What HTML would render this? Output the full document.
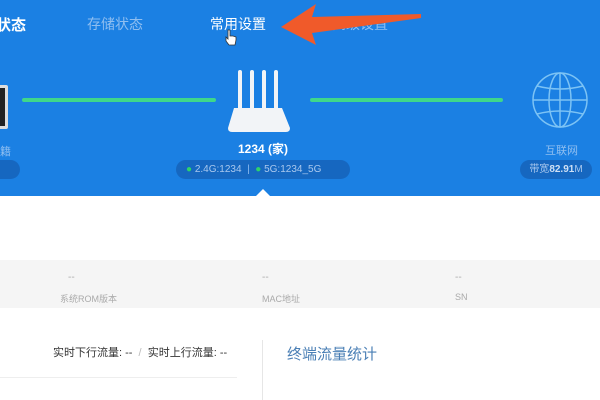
<!DOCTYPE html>
<html><head><meta charset="utf-8"><style>
*{margin:0;padding:0;box-sizing:border-box}
body{width:600px;height:400px;overflow:hidden;background:#fff;position:relative;font-family:"Liberation Sans","Noto Sans CJK SC",sans-serif}
.a{position:absolute;white-space:nowrap}
#top{position:absolute;left:0;top:0;width:600px;height:196px;background:#1b80e3}
.pill{position:absolute;height:19px;border-radius:10px;background:#1667c0;color:#a9c8ee;font-size:10px;line-height:19px}
.line{position:absolute;height:4px;background:#3fd78a;top:98px;border-radius:2px}
</style></head><body>
<div id="top"></div>
<div class="a" style="left:-4px;top:14px;color:#fff;font-size:15px;font-weight:bold">状态</div>
<div class="a" style="left:87px;top:14px;color:#8fbef0;font-size:14px">存储状态</div>
<div class="a" style="left:210px;top:14px;color:#fff;font-size:14px">常用设置</div>
<div class="a" style="left:332px;top:14px;color:#8fbef0;font-size:14px">高级设置</div>
<svg class="a" style="left:0;top:0" width="600" height="200">
<polygon points="281,27 316,4 312,17 421,14 421,18 312,33 316,45" fill="#f05a2a"/>
<path d="M228,30 l0,9 l-2,-2 l0,4 l3,4 l6,0 l1,-5 l0,-3 l-3,-1 l-3,0 l0,-6z" fill="#fff" stroke="#333" stroke-width="0.8"/>
<rect x="-6" y="85" width="14" height="44" rx="2" fill="#ddd"/>
<rect x="-6" y="88" width="11" height="38" fill="#222"/>
<g fill="#f2f4f7">
<rect x="238" y="70" width="4" height="44" rx="2"/><rect x="250" y="70" width="4" height="44" rx="2"/>
<rect x="262" y="70" width="4" height="44" rx="2"/><rect x="274" y="70" width="4" height="44" rx="2"/>
<path d="M234,108 L282,108 L290,128 Q290,132 286,132 L232,132 Q228,132 228,128Z"/>
</g>
<g fill="none" stroke="#7cc3f5" stroke-width="1.5">
<circle cx="560" cy="100" r="27"/><ellipse cx="560" cy="100" rx="11" ry="27"/>
<line x1="560" y1="73" x2="560" y2="127"/><line x1="533" y1="100" x2="587" y2="100"/>
<path d="M537,86 Q560,92 583,86 M537,114 Q560,108 583,114"/>
</g>
<polygon points="256,196 263,189 270,196" fill="#fff"/>
</svg>
<div class="line" style="left:22px;width:194px"></div>
<div class="line" style="left:310px;width:193px"></div>
<div class="a" style="left:0;top:143px;color:#8fbef0;font-size:11px">籍</div>
<div class="pill" style="left:-10px;top:160px;width:30px"></div>
<div class="a" style="left:230px;top:140px;color:#fff;font-size:12px;font-weight:bold;width:66px;text-align:center">1234 (家)</div>
<div class="pill" style="left:176px;top:160px;width:174px"><span style="color:#2ed36a;margin-left:10px">●</span> 2.4G:1234 &nbsp;<span style="color:#8fbef0">|</span>&nbsp; <span style="color:#2ed36a">●</span> 5G:1234_5G</div>
<div class="a" style="left:545px;top:142px;color:#8fbef0;font-size:11px">互联网</div>
<div class="pill" style="left:520px;top:160px;width:72px;text-align:center">带宽<b style="color:#cfe0f5">82.91</b>M</div>
<div class="a" style="left:0;top:260px;width:600px;height:48px;background:#f5f5f5"></div>
<div class="a" style="left:68px;top:272px;color:#aaa;font-size:10px">--</div>
<div class="a" style="left:60px;top:292px;color:#aaa;font-size:9px">系统ROM版本</div>
<div class="a" style="left:262px;top:272px;color:#aaa;font-size:10px">--</div>
<div class="a" style="left:262px;top:292px;color:#aaa;font-size:9px">MAC地址</div>
<div class="a" style="left:455px;top:272px;color:#aaa;font-size:10px">--</div>
<div class="a" style="left:455px;top:292px;color:#aaa;font-size:9px">SN</div>
<div class="a" style="left:53px;top:344px;color:#333;font-size:11px">实时下行流量: -- <span style="color:#bbb">&nbsp;/&nbsp;</span> 实时上行流量: --</div>
<div class="a" style="left:0;top:377px;width:237px;height:1px;background:#eee"></div>
<div class="a" style="left:262px;top:340px;width:1px;height:60px;background:#e6e6e6"></div>
<div class="a" style="left:287px;top:343px;color:#4a7fb5;font-size:15px">终端流量统计</div>
</body></html>
